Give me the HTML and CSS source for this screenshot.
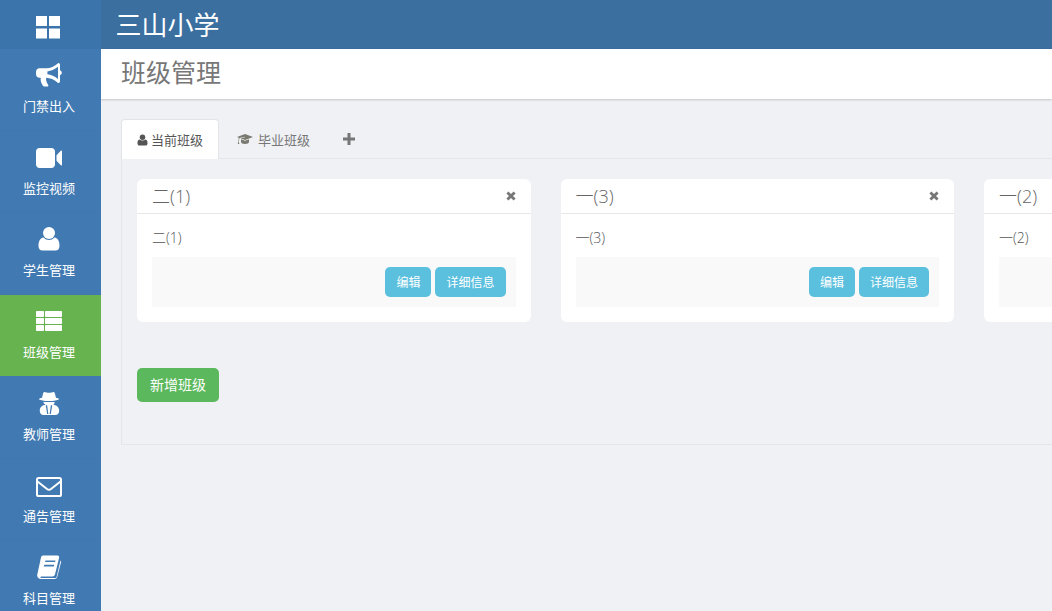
FILE: index.html
```html
<!DOCTYPE html>
<html lang="zh">
<head>
<meta charset="utf-8">
<title>班级管理</title>
<link rel="stylesheet" href="styles.css">
</head>
<body>
<div class="app">
  <aside class="sidebar">
    <div class="logo-tile">
      <svg class="ico-grid" viewBox="0 0 24 23"><path d="M0 0h11v10H0zM13 0h11v10H13zM0 12.500h11v10H0zM13 12.500h11v10H13z"/></svg>
    </div>
    <a class="nav-item">
      <svg class="ico" viewBox="0 0 26 24"><path d="M24 1.500c-.2-1-1-1.500-1.600-1.500-4 3.500-8 5.200-12 5.200H3.500C1.500 5.200 0 6.800 0 8.700v2.600c0 2 1.500 3.500 3.500 3.500h1.300c-.6 2.400.2 4.800 1.800 7.400.4.700 1.300 1.300 2.400 1.300h2.300c1 0 1.400-1 .8-1.800-1.500-2-2.500-4.500-1.900-6.900 4 .1 8 1.800 11.900 5.200.7 0 1.700-.5 1.900-1.500V12.300c1.100-.4 1.800-1.300 1.800-2.500S25.100 7.700 24 7.300zM22 16c-3.500-2.800-7-4.200-10.600-4.700V8.400C15 8 18.500 6.600 22 3.800z"/></svg>
      <span>门禁出入</span>
    </a>
    <a class="nav-item">
      <svg class="ico ico-low" viewBox="0 0 26 20"><path d="M3.500 0h12C17.400 0 19 1.500 19 3.500v13c0 1.900-1.600 3.500-3.500 3.500h-12C1.600 20 0 18.400 0 16.500v-13C0 1.500 1.600 0 3.500 0zM20.500 7.200 24.800 2.700c.5-.5 1.200-.2 1.200.5v13.600c0 .7-.7 1-1.200.5l-4.300-4.500z"/></svg>
      <span>监控视频</span>
    </a>
    <a class="nav-item">
      <svg class="ico" viewBox="0 0 24 24"><ellipse cx="12" cy="6" rx="6" ry="6"/><path d="M6.500 10.500C8 12.200 10 13 12 13s4-.8 5.500-2.500c3.600.5 5 3.800 5 8.500 0 3-1.800 4.500-4 4.500H5.500c-2.200 0-4-1.500-4-4.500 0-4.700 1.400-8 5-8.500z"/></svg>
      <span>学生管理</span>
    </a>
    <a class="nav-item nav-active">
      <svg class="ico" viewBox="0 0 26 20"><path d="M1 0h6c.6 0 1 .4 1 1v4c0 .6-.4 1-1 1H1c-.6 0-1-.4-1-1V1c0-.6.4-1 1-1zM10 0h15c.6 0 1 .4 1 1v4c0 .6-.4 1-1 1H10c-.6 0-1-.4-1-1V1c0-.6.4-1 1-1zM1 7h6c.6 0 1 .4 1 1v4c0 .6-.4 1-1 1H1c-.6 0-1-.4-1-1V8c0-.6.4-1 1-1zM10 7h15c.6 0 1 .4 1 1v4c0 .6-.4 1-1 1H10c-.6 0-1-.4-1-1V8c0-.6.4-1 1-1zM1 14h6c.6 0 1 .4 1 1v4c0 .6-.4 1-1 1H1c-.6 0-1-.4-1-1v-4c0-.6.4-1 1-1zM10 14h15c.6 0 1 .4 1 1v4c0 .6-.4 1-1 1H10c-.6 0-1-.4-1-1v-4c0-.6.4-1 1-1z"/></svg>
      <span>班级管理</span>
    </a>
    <a class="nav-item">
      <svg class="ico" viewBox="0 0 22 26"><path fill-rule="evenodd" d="M6 1c1.500 0 3 1 5 1s3.500-1 5-1c.8 0 1.200.8 1.500 2l1 4.200C20.500 7.600 22 8.200 22 8.800c0 .8-3 1.700-7 2-1 .1-7 .1-8 0-4-.3-7-1.200-7-2 0-.6 1.500-1.200 3.500-1.600l1-4.200C4.800 1.800 5.200 1 6 1zM5 12h12c.3 1-.2 2.500-1.500 3 3.500.3 6.500 2.500 6.500 6.500 0 3-1.500 4.500-4 4.500H5c-2.500 0-4-1.500-4-4.500 0-4 3-6.200 6.500-6.500C6.200 14.500 4.700 13 5 12zM7.500 15.500H9L10.300 25H9zM14.500 15.500H13L11.700 25H13z"/></svg>
      <span>教师管理</span>
    </a>
    <a class="nav-item">
      <svg class="ico ico-mail" viewBox="0 0 26 20"><rect x="1" y="1" width="24" height="18" rx="1.600"/><path d="M1.500 4.500 11 12c1.200 1 2.800 1 4 0l9.500-7.500"/></svg>
      <span>通告管理</span>
    </a>
    <a class="nav-item">
      <svg class="ico" viewBox="0 0 24 24"><path fill-rule="evenodd" d="M6 .5h14.500c1.300 0 2 1 1.600 2.300L18 19.500c-.3 1.300-1.400 2-2.700 2H5c-1 0-1.600.2-1.700.7-.1.500.5.800 1.400.8h13.800c.5 0 .8-.3 1-.8L23.500 5.500c.7.500.7 1.300.5 2l-3.800 14.500c-.4 1.200-1.300 2-2.600 2H4C2 24 .3 22.500.2 20.500c0-.7.1-1.300.3-2L4 2.500C4.300 1.300 5 .5 6 .5zM8.500 5.500l-.5 1.600h10l.5-1.600zM7.300 9.800l-.5 1.600h10l.5-1.600z"/></svg>
      <span>科目管理</span>
    </a>
  </aside>
  <main class="main">
    <header class="topbar">三山小学</header>
    <div class="titlebar"><h1>班级管理</h1></div>
    <section class="content">
      <nav class="tabs">
        <a class="tab tab-active">
          <svg class="tab-ico" viewBox="0 0 12 12"><circle cx="6" cy="3" r="3"/><path d="M2.700 5.400C3.500 6.200 4.700 6.600 6 6.600s2.500-.4 3.300-1.200C11 5.700 11.500 7.500 11.500 9.500c0 1.700-1 2.500-2 2.500h-7c-1 0-2-.8-2-2.500 0-2 .5-3.800 2.200-4.100z"/></svg>
          当前班级
        </a>
        <a class="tab">
          <svg class="tab-ico tab-ico-cap" viewBox="0 0 16 12"><path d="M8 1 16 4 8 7 3.500 5.300 8 4.200 7.800 3.800 2.500 5 1.800 8.500 2.300 11H.8l.6-2.500L1.800 4.800 0 4zM4 6.200 8 7.700l4-1.500V9c0 1-1.800 2-4 2S4 10 4 9z"/></svg>
          毕业班级
        </a>
        <a class="tab tab-plus">
          <svg class="tab-ico-plus" viewBox="0 0 12 12"><path d="M4.500 0h3v4.500H12v3H7.500V12h-3V7.500H0v-3h4.500z"/></svg>
        </a>
      </nav>
      <div class="tab-panel">
        <div class="cards">
          <article class="card">
            <div class="card-head">
              <span class="card-title">二(1)</span>
              <svg class="close" viewBox="0 0 10 10"><path d="M2.400.4 5 3l2.600-2.600 2 2L7 5l2.600 2.600-2 2L5 7 2.400 9.600l-2-2L3 5 .4 2.400z"/></svg>
            </div>
            <div class="card-body">
              <p class="card-text">二(1)</p>
              <div class="card-actions"><button class="btn btn-info">编辑</button><button class="btn btn-info">详细信息</button></div>
            </div>
          </article>
          <article class="card">
            <div class="card-head">
              <span class="card-title">一(3)</span>
              <svg class="close" viewBox="0 0 10 10"><path d="M2.400.4 5 3l2.600-2.600 2 2L7 5l2.600 2.600-2 2L5 7 2.400 9.600l-2-2L3 5 .4 2.400z"/></svg>
            </div>
            <div class="card-body">
              <p class="card-text">一(3)</p>
              <div class="card-actions"><button class="btn btn-info">编辑</button><button class="btn btn-info">详细信息</button></div>
            </div>
          </article>
          <article class="card">
            <div class="card-head">
              <span class="card-title">一(2)</span>
              <svg class="close" viewBox="0 0 10 10"><path d="M2.400.4 5 3l2.600-2.600 2 2L7 5l2.600 2.600-2 2L5 7 2.400 9.600l-2-2L3 5 .4 2.400z"/></svg>
            </div>
            <div class="card-body">
              <p class="card-text">一(2)</p>
              <div class="card-actions"><button class="btn btn-info">编辑</button><button class="btn btn-info">详细信息</button></div>
            </div>
          </article>
        </div>
        <button class="btn btn-add">新增班级</button>
      </div>
    </section>
  </main>
</div>
</body>
</html>
```
FILE: styles.css
```css
* { box-sizing: border-box; }
html, body { margin: 0; height: 100%; overflow: hidden; }
body {
  background: #eff1f5;
  font-family: "Noto Sans CJK SC", "Liberation Sans", sans-serif;
  font-size: 12px;
  color: #676a6c;
}
.app { display: grid; grid-template-columns: 101px 1fr; height: 611px; overflow: hidden; }

.sidebar { background: #417ab2; height: 611px; overflow: hidden; }
.logo-tile { height: 49px; background: #3b74aa; display: flex; align-items: center; justify-content: center; padding-right: 5px; }
.ico-grid { width: 24px; height: 23px; fill: #fff; margin-top: 5px; }
.nav-item {
  height: 82px;
  display: flex;
  flex-direction: column;
  align-items: center;
  color: #fff;
  font-size: 13px;
  line-height: 18px;
  padding: 14px 3px 0 0;
  border-bottom: 1px solid #3f77ae;
}
.nav-item span { margin-top: 10px; }
.ico { width: 26px; height: 24px; fill: #fff; flex: none; }
.ico-low { transform: translateY(1px); }
.ico-mail { fill: none; stroke: #fff; stroke-width: 2; transform: translateY(2px); }
.nav-active { background: #67b350; border-bottom-color: #417ab2; }

.main { min-width: 0; overflow: hidden; }
.topbar {
  height: 49px;
  background: #3b6fa0;
  color: #fff;
  font-size: 26px;
  line-height: 48px;
  padding-left: 14.500px;
}
.titlebar {
  height: 50px;
  background: #fff;
  box-shadow: 0 1px 2px rgba(0,0,0,.18);
  padding-left: 20px;
}
.titlebar h1 { margin: 0; font-size: 25px; font-weight: 400; line-height: 44px; color: #777; }

.content { padding: 20px 0 0 20px; }
.tabs { display: flex; height: 39px; position: relative; z-index: 1; }
.tab {
  display: flex;
  align-items: center;
  gap: 3px;
  padding: 0 16px 0 17px;
  color: #777;
  font-size: 13px;
  border: 1px solid transparent;
  border-bottom: 0;
}
.tab-active {
  background: #fff;
  color: #555;
  border-color: #e2e4e8;
  border-radius: 4px 4px 0 0;
  padding: 0 15px;
  width: 98px;
  height: 40px;
}
.tab-ico { width: 11px; height: 12px; fill: #555; flex: none; }
.tab-ico-cap { width: 16px; height: 12px; fill: #7a7a70; margin-right: 2px; }
.tab-plus { padding: 0 0 0 15px; }
.tab-ico-plus { width: 12px; height: 12px; fill: #777; }

.tab-panel {
  border: 1px solid #e5e6e9;
  border-right: 0;
  height: 287px;
  padding: 20px 0 0 15px;
  overflow: hidden;
}
.cards { display: flex; gap: 30px; width: 1400px; }
.card { width: 393.500px; height: 143px; background: #fff; border-radius: 6px; flex: none; }
.card-head {
  height: 35px;
  border-bottom: 1px solid #e7e7e7;
  display: flex;
  align-items: center;
  justify-content: space-between;
  padding: 0 15px;
}
.card-title { font-family: "Open Sans", "Noto Sans CJK SC", sans-serif; font-size: 18px; font-weight: 300; color: #666; line-height: 34px; }
.close { width: 10px; height: 10px; fill: #777; }
.card-body { padding: 15px 15px 0; }
.card-text { font-family: "Open Sans", "Noto Sans CJK SC", sans-serif; margin: 0 0 10px; font-size: 14px; font-weight: 300; line-height: 18px; color: #555; }
.card-actions {
  height: 50px;
  background: #f9f9f9;
  display: flex;
  justify-content: flex-end;
  align-items: center;
  gap: 4px;
  padding-right: 10px;
}
.btn {
  border: 0;
  font-family: inherit;
  color: #fff;
  border-radius: 5px;
  padding: 0;
}
.btn-info { background: #5bc0de; font-size: 12px; height: 30px; padding: 0 11px; line-height: 28px; }
.btn-add {
  display: block;
  margin-top: 46px;
  width: 82px;
  height: 34px;
  padding-bottom: 2px;
  background: #5cb85c;
  font-size: 14px;
}
```
